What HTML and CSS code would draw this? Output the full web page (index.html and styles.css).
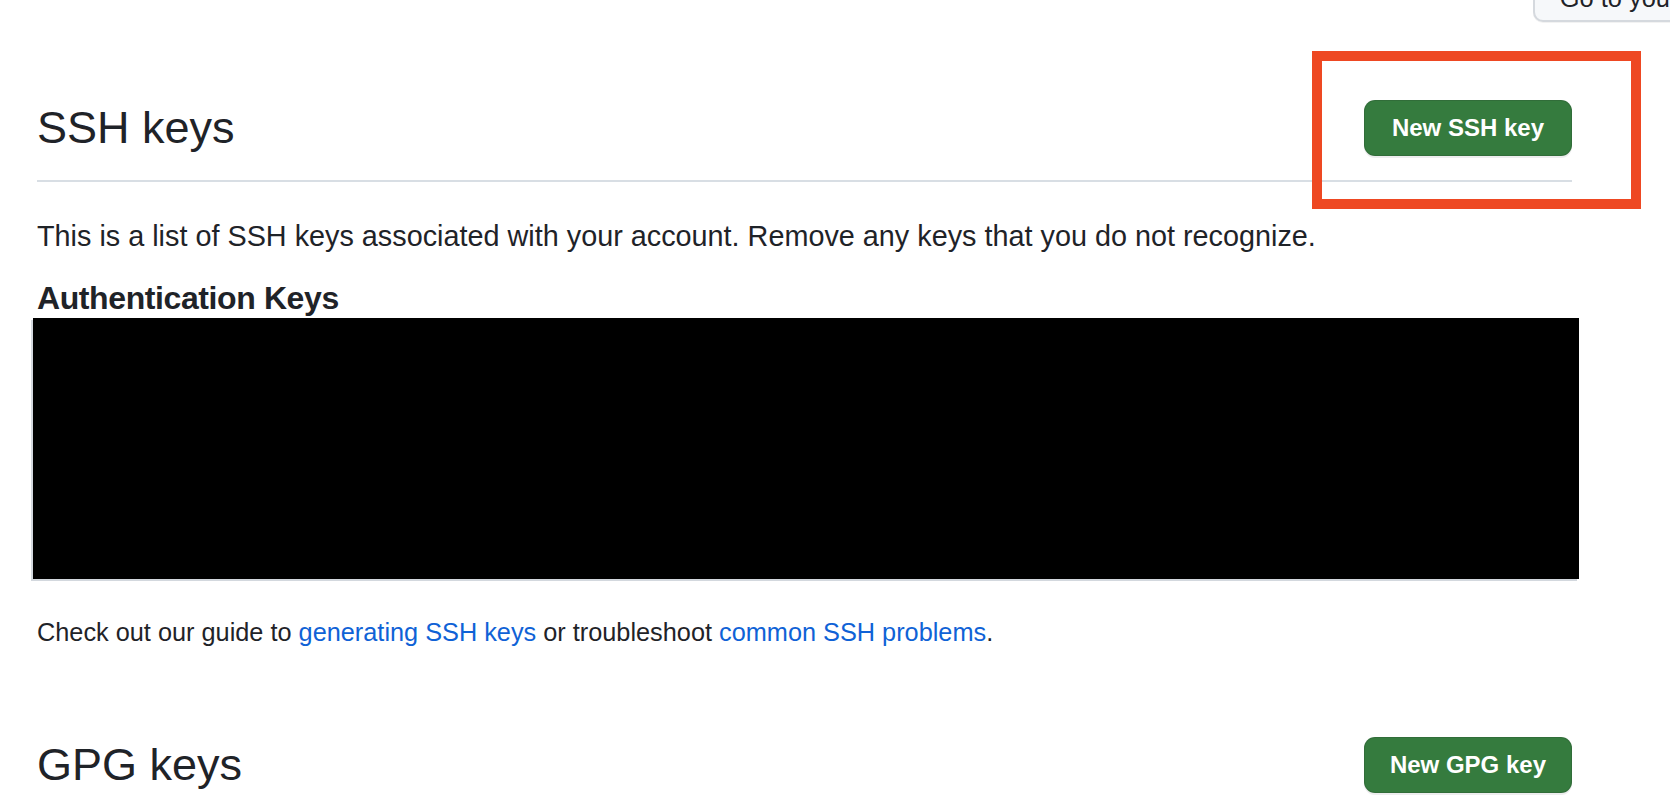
FILE: index.html
```html
<!DOCTYPE html>
<html lang="en">
<head>
<meta charset="utf-8">
<title>SSH keys</title>
<link rel="stylesheet" href="styles.css">
</head>
<body>
  <div class="topbar">
    <button class="profile-btn">Go to your personal profile</button>
  </div>

  <main class="content">
    <section class="section">
      <div class="subhead">
        <h2 class="subhead-title">SSH keys</h2>
        <button class="btn-primary">New SSH key</button>
      </div>
      <p class="lead">This is a list of SSH keys associated with your account. Remove any keys that you do not recognize.</p>
      <h3 class="keys-title">Authentication Keys</h3>
      <div class="keys-box"></div>
      <p class="help">Check out our guide to <a href="#">generating SSH keys</a> or troubleshoot <a href="#">common SSH problems</a>.</p>
    </section>

    <section class="section gpg">
      <div class="subhead">
        <h2 class="subhead-title">GPG keys</h2>
        <button class="btn-primary btn-gpg">New GPG key</button>
      </div>
    </section>
  </main>

  <div class="highlight"></div>
</body>
</html>
```

FILE: styles.css
```css
html, body {
  margin: 0;
  padding: 0;
  background: #ffffff;
  overflow: hidden;
}

body {
  position: relative;
  width: 1670px;
  height: 801px;
  font-family: "Liberation Sans", Arial, sans-serif;
  color: #1f2328;
}

.topbar {
  display: flex;
  justify-content: flex-end;
  height: 23px;
}

.profile-btn {
  flex: none;
  margin-top: -32px;
  margin-right: -217px;
  height: 54px;
  padding: 0 26px 9px 25px;
  font-family: "Liberation Sans", Arial, sans-serif;
  font-size: 25.4px;
  line-height: 26px;
  color: #1f2328;
  background: #f6f8fa;
  border: 2px solid #d5d9de;
  border-radius: 10px;
  white-space: nowrap;
  display: flex;
  align-items: flex-end;
  box-sizing: border-box;
  box-shadow: 0 1px 0 rgba(27, 31, 36, 0.06);
}

.content {
  width: 1535px;
  margin-left: 37px;
}

.section {
  padding-top: 77px;
}

.subhead {
  display: flex;
  justify-content: space-between;
  align-items: center;
  padding-bottom: 24px;
  border-bottom: 2px solid #d8dee4;
}

.subhead-title {
  margin: 0;
  font-size: 45px;
  font-weight: 400;
  line-height: 56px;
  color: #1f2328;
}

.btn-primary {
  height: 56px;
  padding: 0 27px;
  font-family: "Liberation Sans", Arial, sans-serif;
  font-size: 24px;
  font-weight: 700;
  color: #ffffff;
  background: #357b3e;
  border: 1px solid rgba(27, 31, 36, 0.15);
  border-radius: 11px;
  box-shadow: 0 2px 0 rgba(27, 31, 36, 0.08);
  white-space: nowrap;
}

.btn-gpg {
  padding: 0 25px;
}

.lead {
  margin: 36px 0 0;
  font-size: 28.8px;
  line-height: 36px;
}

.keys-title {
  margin: 25px 0 0;
  font-size: 32px;
  font-weight: 700;
  line-height: 39px;
  letter-spacing: -0.4px;
}

.keys-box {
  height: 261px;
  margin-left: -4px;
  width: 1546px;
  background: #000000;
  box-shadow: -2px 2px 0 #d3d8de;
}

.help {
  margin: 37px 0 0;
  font-size: 25.3px;
  line-height: 32px;
}

.help a {
  color: #0f62d6;
  text-decoration: none;
}

.section.gpg {
  padding-top: 89px;
}

.gpg .subhead {
  padding-bottom: 0;
  border-bottom: none;
}

.highlight {
  position: absolute;
  left: 1312px;
  top: 51px;
  width: 329px;
  height: 158px;
  box-sizing: border-box;
  border: 10px solid #ee4822;
  pointer-events: none;
}
```
